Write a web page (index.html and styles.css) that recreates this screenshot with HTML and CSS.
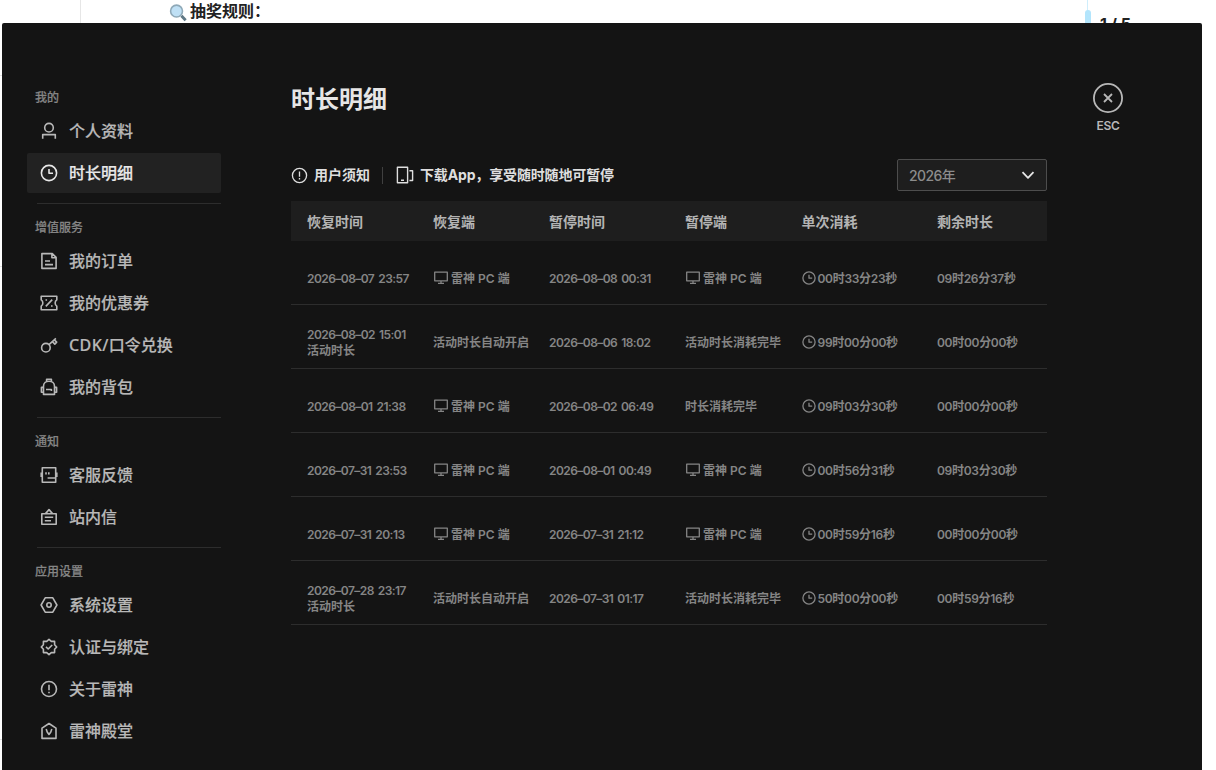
FILE: index.html
```html
<!DOCTYPE html>
<html lang="zh-CN">

<head>
  <meta charset="UTF-8">
  <meta name="viewport" content="width=device-width, initial-scale=1.0">
  <title>时长明细</title>
  <link rel="stylesheet" href="styles.css">
</head>

<body>
  <svg class="sprite" xmlns="http://www.w3.org/2000/svg">
    <symbol id="i-user" viewBox="0 0 18 18"><circle cx="9" cy="5.7" r="4.3"/><path d="M2.7 16.8v-4.2h12.6v4.2"/></symbol>
    <symbol id="i-clock" viewBox="0 0 18 18"><circle cx="9" cy="9" r="7.6"/><path d="M9 5v4.2h4"/></symbol>
    <symbol id="i-order" viewBox="0 0 18 18"><path d="M1.9 1.6h10.4l3.8 3.8v11H1.9zM11.9 1.6v4.2h4.2M5 9h5M5 12.6h8"/></symbol>
    <symbol id="i-coupon" viewBox="0 0 18 18"><path d="M1.2 2.2h15.6v3.6c-2.200 1.4-2.200 5 0 6.4v3.6H1.2v-3.6c2.200-1.4 2.200-5 0-6.4zM12.2 5.6l-6.4 6.8M5.5 6h1.6M11 12h1.6"/></symbol>
    <symbol id="i-key" viewBox="0 0 18 18"><circle cx="5.9" cy="11.7" r="4.3"/><path d="M9 8.6l6.9-6.3M12.4 5.6l2.4 2.5 1.9-2-2.4-2.2"/></symbol>
    <symbol id="i-bag" viewBox="0 0 18 18"><path d="M6.6 3.4V1.3h4.8v2.1M3.5 16.4V8.2C3.5 1.6 14.5 1.6 14.5 8.2v8.2zM3.5 9.4H1.4v4.8h2.1M14.5 9.4h2.1v4.8h-2.1M6 11.5h5.4v1.6"/></symbol>
    <symbol id="i-service" viewBox="0 0 18 18"><path d="M2.3 1.8h13.4v14.4H2.3zM1.2 6.5v4.6M16.8 6.5v4.6M6 6.3v2.2M8.8 6.3v2.2M7.6 12h8"/></symbol>
    <symbol id="i-mail" viewBox="0 0 18 18"><path d="M1.8 5.8h14.4v10.4H1.8zM5.5 5.6L9 1.6l3.5 4M4.8 9.3h8.4M4.8 12.7h6.2"/></symbol>
    <symbol id="i-hex" viewBox="0 0 18 18"><path d="M5.2 1.8h7.6L16.9 9l-4.1 7.2H5.2L1.1 9z"/><circle cx="9" cy="9" r="2.2"/></symbol>
    <symbol id="i-verify" viewBox="0 0 18 18"><path d="M9 1.4l2.3 2h3.3v3.3L16.7 9l-2.1 2.3v3.3h-3.3L9 16.6l-2.3-2H3.4v-3.3L1.3 9l2.1-2.3V3.4h3.3zM6 8.9l2.2 2.1 4-4"/></symbol>
    <symbol id="i-info" viewBox="0 0 18 18"><circle cx="9" cy="9" r="7.5"/><path d="M9 4.8v5.4M9 11.7v1.6"/></symbol>
    <symbol id="i-house" viewBox="0 0 18 18"><path d="M2 6.2L9 1.5l7 4.7v10.2H2zM6.2 7l1 3L9 12.4l1.8-2.4 1-3"/></symbol>
    <symbol id="i-phone" viewBox="0 0 18 18"><path d="M1.4 1.2h10.2v15.6H1.4zM5 14.2h3M13.4 4.8h3.2v9.7h-3.2"/></symbol>
    <symbol id="i-pc" viewBox="0 0 14 14"><path d="M.7 1.2h12.6v8.6H.7zM7 9.8v2.5M4 12.4h6"/></symbol>
    <symbol id="i-time" viewBox="0 0 14 14"><circle cx="7" cy="7" r="6.1"/><path d="M7 3.8v3.4h3.2"/></symbol>
  </svg>

  <div class="page-strip">
    <div class="strip-left"></div>
    <div class="strip-body">
      <svg class="search" viewBox="0 0 16 16"><path d="M11 10.5l3.8 4" stroke="#5f7885" stroke-width="2.6"/><circle cx="6.7" cy="6.3" r="5.3" fill="#bfe0f5" stroke="#8fa9b8" stroke-width="1.4"/></svg>
      <span class="rule-title">抽奖规则：</span>
    </div>
    <div class="scroll"><div class="thumb"></div></div>
    <div class="pager">1 / 5</div>
  </div>

  <div class="stage">
    <div class="gutter"><i></i><i></i><i></i></div>
    <div class="panel">
      <nav class="sidebar">
        <div class="group">
          <div class="group-name">我的</div>
          <div class="item"><svg><use href="#i-user"/></svg>个人资料</div>
          <div class="item active"><svg><use href="#i-clock"/></svg>时长明细</div>
        </div>
        <div class="group">
          <div class="group-name">增值服务</div>
          <div class="item"><svg><use href="#i-order"/></svg>我的订单</div>
          <div class="item"><svg><use href="#i-coupon"/></svg>我的优惠券</div>
          <div class="item"><svg><use href="#i-key"/></svg><span><span class="latin">CDK/</span>口令兑换</span></div>
          <div class="item"><svg><use href="#i-bag"/></svg>我的背包</div>
        </div>
        <div class="group">
          <div class="group-name">通知</div>
          <div class="item"><svg><use href="#i-service"/></svg>客服反馈</div>
          <div class="item"><svg><use href="#i-mail"/></svg>站内信</div>
        </div>
        <div class="group">
          <div class="group-name">应用设置</div>
          <div class="item"><svg><use href="#i-hex"/></svg>系统设置</div>
          <div class="item"><svg><use href="#i-verify"/></svg>认证与绑定</div>
          <div class="item"><svg><use href="#i-info"/></svg>关于雷神</div>
          <div class="item"><svg><use href="#i-house"/></svg>雷神殿堂</div>
        </div>
      </nav>

      <main class="main">
        <h1>时长明细</h1>
        <div class="toolbar">
          <div class="notice"><svg><use href="#i-info"/></svg>用户须知</div>
          <div class="download"><svg><use href="#i-phone"/></svg>下载App，享受随时随地可暂停</div>
          <div class="select">2026年
            <svg viewBox="0 0 14 14"><path d="M1.5 4.2L7 9.8l5.5-5.6"/></svg>
          </div>
        </div>
        <table>
          <colgroup><col class="c1"><col class="c2"><col class="c3"><col class="c4"><col class="c5"><col class="c6"></colgroup>
          <thead>
            <tr><th>恢复时间</th><th>恢复端</th><th>暂停时间</th><th>暂停端</th><th>单次消耗</th><th>剩余时长</th></tr>
          </thead>
          <tbody>
            <tr>
              <td class="date">2026–08–07 23:57</td>
              <td><div class="cell"><svg><use href="#i-pc"/></svg>雷神 PC 端</div></td>
              <td class="date">2026–08–08 00:31</td>
              <td><div class="cell"><svg><use href="#i-pc"/></svg>雷神 PC 端</div></td>
              <td class="num"><div class="cell"><svg><use href="#i-time"/></svg>00时33分23秒</div></td>
              <td class="num">09时26分37秒</td>
            </tr>
            <tr>
              <td><span class="date">2026–08–02 15:01</span><br>活动时长</td>
              <td>活动时长自动开启</td>
              <td class="date">2026–08–06 18:02</td>
              <td>活动时长消耗完毕</td>
              <td class="num"><div class="cell"><svg><use href="#i-time"/></svg>99时00分00秒</div></td>
              <td class="num">00时00分00秒</td>
            </tr>
            <tr>
              <td class="date">2026–08–01 21:38</td>
              <td><div class="cell"><svg><use href="#i-pc"/></svg>雷神 PC 端</div></td>
              <td class="date">2026–08–02 06:49</td>
              <td>时长消耗完毕</td>
              <td class="num"><div class="cell"><svg><use href="#i-time"/></svg>09时03分30秒</div></td>
              <td class="num">00时00分00秒</td>
            </tr>
            <tr>
              <td class="date">2026–07–31 23:53</td>
              <td><div class="cell"><svg><use href="#i-pc"/></svg>雷神 PC 端</div></td>
              <td class="date">2026–08–01 00:49</td>
              <td><div class="cell"><svg><use href="#i-pc"/></svg>雷神 PC 端</div></td>
              <td class="num"><div class="cell"><svg><use href="#i-time"/></svg>00时56分31秒</div></td>
              <td class="num">09时03分30秒</td>
            </tr>
            <tr>
              <td class="date">2026–07–31 20:13</td>
              <td><div class="cell"><svg><use href="#i-pc"/></svg>雷神 PC 端</div></td>
              <td class="date">2026–07–31 21:12</td>
              <td><div class="cell"><svg><use href="#i-pc"/></svg>雷神 PC 端</div></td>
              <td class="num"><div class="cell"><svg><use href="#i-time"/></svg>00时59分16秒</div></td>
              <td class="num">00时00分00秒</td>
            </tr>
            <tr>
              <td><span class="date">2026–07–28 23:17</span><br>活动时长</td>
              <td>活动时长自动开启</td>
              <td class="date">2026–07–31 01:17</td>
              <td>活动时长消耗完毕</td>
              <td class="num"><div class="cell"><svg><use href="#i-time"/></svg>50时00分00秒</div></td>
              <td class="num">00时59分16秒</td>
            </tr>
          </tbody>
        </table>
      </main>

      <div class="close">
        <svg viewBox="0 0 30 30"><circle cx="15" cy="15" r="14.1"/><path d="M11 11l8 8M19 11l-8 8"/></svg>
        <span>ESC</span>
      </div>
    </div>
  </div>
</body>

</html>
```

FILE: styles.css
```css
* {
  margin: 0;
  padding: 0;
  box-sizing: border-box;
}

body {
  font-family: Inter, "Noto Sans CJK SC", sans-serif;
  background-color: #fff;
  height: 770px;
  overflow: hidden;
}

svg {
  fill: none;
  stroke: currentColor;
  stroke-width: 1.6;
  stroke-linejoin: round;
  flex: none;
}

.sprite {
  display: none;
}

.page-strip {
  display: flex;
  height: 23px;
  overflow: hidden;
  color: #222;
  font-weight: 700;
}

.strip-left {
  width: 81px;
  border-right: 1px solid #e6e6e6;
}

.strip-body {
  display: flex;
  width: 1004px;
  padding-left: 88px;
}

.search {
  width: 18px;
  height: 18px;
  margin-top: 4px;
}

.rule-title {
  margin-left: 3px;
  font-size: 16px;
  line-height: 22px;
  font-weight: 600;
}

.scroll {
  width: 6px;
  background: linear-gradient(#cfeefc, #cfeefc) 2px 0 / 1px 100% no-repeat;
}

.thumb {
  height: 30px;
  margin-top: 10px;
  border-radius: 3px;
  background-color: #b3e5fc;
}

.pager {
  padding: 15px 0 0 9px;
  font-size: 16px;
  line-height: 18px;
  white-space: nowrap;
}

.stage {
  display: flex;
  height: 747px;
}

.gutter {
  width: 2px;
  padding-top: 52px;
}

.gutter i {
  display: block;
  height: 1px;
  margin-bottom: 190px;
  background-color: #e3e3e3;
}

.gutter i:nth-child(2) {
  margin-bottom: 472px;
}

.panel {
  display: flex;
  width: 1200px;
  padding-left: 25px;
  background-color: #141414;
  border-radius: 2px 2px 0 0;
}

.sidebar {
  width: 194px;
  padding-top: 64px;
  -webkit-text-stroke: 0.2px;
}

.group {
  display: flex;
  flex-direction: column;
  gap: 2px;
}

.group + .group {
  margin-top: 2px;
}

.group + .group::before {
  content: "";
  height: 1px;
  margin: 8px 0 11px 10px;
  background-color: #2d2d2d;
}

.group-name {
  height: 20px;
  padding-left: 8px;
  margin-bottom: 2px;
  font-size: 12px;
  line-height: 22px;
  font-weight: 500;
  color: #858585;
}

.item {
  display: flex;
  align-items: center;
  gap: 11px;
  height: 40px;
  padding-left: 13px;
  font-family: "Noto Sans", "Noto Sans CJK SC", sans-serif;
  font-size: 16px;
  line-height: 38px;
  font-weight: 500;
  color: #b8b8b8;
  border-radius: 2px;
}

.item svg {
  width: 18px;
  height: 18px;
}

.item.active {
  background-color: #222;
  color: #e8e8e8;
}

.latin {
  letter-spacing: 0.4px;
}

.main {
  width: 756px;
  margin-left: 70px;
  padding-top: 60px;
}

h1 {
  height: 32px;
  font-size: 24px;
  line-height: 34px;
  font-weight: 700;
  color: #e6e6e6;
}

.toolbar {
  display: flex;
  align-items: center;
  height: 32px;
  margin: 44px 0 10px;
  font-size: 14px;
  font-weight: 700;
  color: #dedede;
}

.notice,
.download {
  display: flex;
  align-items: center;
  line-height: 14px;
}

.notice {
  gap: 5px;
  padding-right: 12px;
  border-right: 1px solid #404040;
}

.download {
  gap: 6px;
  padding-left: 13px;
  letter-spacing: -0.15px;
}

.toolbar svg {
  width: 18px;
  height: 18px;
  stroke-width: 1.4;
}

.toolbar .notice svg {
  width: 17px;
  height: 17px;
  margin-right: 1px;
}

.select {
  display: flex;
  align-items: center;
  justify-content: space-between;
  width: 150px;
  height: 32px;
  margin-left: auto;
  padding: 0 11px;
  border: 1px solid #4d4d4d;
  border-radius: 2px;
  background-color: #1e1e1e;
  font-weight: 500;
  letter-spacing: -0.6px;
  color: #8c8c8c;
}

.toolbar .select svg {
  width: 14px;
  height: 14px;
  color: #e6e6e6;
  stroke-width: 1.8;
}

table {
  width: 756px;
  table-layout: fixed;
  border-collapse: separate;
  border-spacing: 0;
}

.c1 { width: 126px; }
.c2 { width: 116px; }
.c3 { width: 136px; }
.c4 { width: 116.5px; }
.c5 { width: 135.5px; }
.c6 { width: 126px; }

th {
  height: 40px;
  padding: 2px 0 0 16px;
  background-color: #1e1e1e;
  color: #b3b3b3;
  font-size: 14px;
  line-height: 20px;
  font-weight: 700;
  text-align: left;
}

td {
  height: 64px;
  padding: 12px 0 0 16px;
  border-bottom: 1px solid #2d2d2d;
  color: #858585;
  font-size: 12px;
  line-height: 16px;
  font-weight: 600;
  white-space: nowrap;
}

.num {
  letter-spacing: -0.3px;
}

.date {
  letter-spacing: -0.55px;
  word-spacing: 1.5px;
}

.cell {
  display: flex;
  align-items: center;
  gap: 3px;
}

.cell svg {
  width: 14px;
  height: 14px;
  margin: 0 0 1px 1px;
  stroke-width: 1.3;
}

.num .cell svg {
  margin-left: 0;
}

.num .cell {
  gap: 2px;
}

.close {
  display: flex;
  flex-direction: column;
  align-items: center;
  width: 30px;
  margin-left: 46px;
  padding-top: 60px;
  color: #b8b8b8;
  font-size: 12px;
  font-weight: 600;
  letter-spacing: -0.3px;
}

.close svg {
  width: 30px;
  height: 30px;
  stroke-width: 1.8;
}

.close span {
  margin-top: 4px;
  line-height: 18px;
}
```
